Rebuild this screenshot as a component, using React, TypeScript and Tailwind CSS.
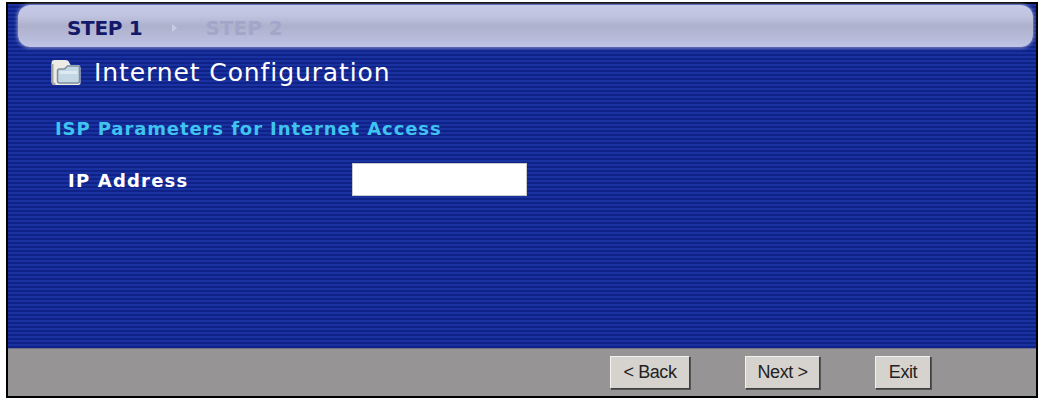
const Folder = () => (
  <svg width="33" height="27" viewBox="0 0 32 27" className="shrink-0">
    <path d="M2 4 Q2 1 5 1 H16 Q19 1 20 4 L21 6 H28 Q31 6 31 9 V24 Q31 26 28 26 H5 Q2 26 2 23 Z" fill="#ecebe6" />
    <path d="M8 12 Q8 10 10 10 H15 L18 7 H28 Q30 7 30 9 V22 Q30 24 28 24 H10 Q8 24 8 22 Z" fill="#c3d8e4" stroke="#7e8f9c" strokeWidth="1.5" />
    <path d="M10 12 H28 V15 H10 Z" fill="#dfeaf0" />
    <path d="M3 5 V23 Q3 25 6 25" fill="none" stroke="#a5a5a0" strokeWidth="2" />
  </svg>
);

const Btn = ({ label, w }: { label: string; w: string }) => (
  <button
    className={`${w} h-[33px] bg-[#d6d3ce] text-[#222] text-[18px] tracking-[-0.4px] border border-t-[#f2f2f0] border-l-[#f2f2f0] border-r-[#3f3f3f] border-b-[#3f3f3f] shadow-[1px_1px_0_#555]`}
  >
    {label}
  </button>
);

export default function App() {
  return (
    <div className="w-[1043px] h-[400px] bg-white pt-[2px] pl-[6px] pr-[5px] pb-[2px] font-['Liberation_Sans',sans-serif]">
      <div className="h-full flex flex-col border-2 border-black">
        <div className="flex-1 px-[1px] pt-[1px] bg-[repeating-linear-gradient(180deg,#1a32a0_0px,#1a32a0_2px,#0f2288_2px,#0f2288_4px)]">
          <div className="ml-[9px] mr-[2px] h-[42px] rounded-[12px] flex items-center pl-[49px] pt-[3px] bg-[linear-gradient(180deg,#c6cae8_0%,#c0c4e0_25%,#adb1cc_50%,#b6bad8_75%,#c0c4e6_100%)] shadow-[0_0_4px_#c0c4e6]">
            <span className="text-[20px] font-bold text-[#14186a] font-['DejaVu_Sans',sans-serif] tracking-[-0.3px]">STEP 1</span>
            <span className="ml-[30px] mr-[28px] w-0 h-0 border-y-[4px] border-y-transparent border-l-[5px] border-l-[#c8cbe4]" />
            <span className="text-[20px] font-bold text-[#a2a7ca] font-['DejaVu_Sans',sans-serif] tracking-[0px]">STEP 2</span>
          </div>
          <div className="flex items-center gap-[12px] ml-[40px] mt-[7px]">
            <Folder />
            <span className="text-[25px] text-white font-['DejaVu_Sans',sans-serif] tracking-[0.9px]">Internet Configuration</span>
          </div>
          <div className="ml-[46px] mt-[23px] text-[18px] font-bold text-[#3fc4f0] font-['DejaVu_Sans',sans-serif] tracking-[0.9px]">
            ISP Parameters for Internet Access
          </div>
          <div className="flex items-center mt-[21px] ml-[59px]">
            <span className="w-[284px] pt-[2px] text-[18px] font-bold text-white font-['DejaVu_Sans',sans-serif] tracking-[1.2px]">IP Address</span>
            <input className="w-[175px] h-[33px] bg-white border border-[#c9c9c9] outline-none" />
          </div>
        </div>
        <div className="h-[48px] flex items-center bg-[#969494] border-t border-[#6f7390] pl-[602px]">
          <Btn label="< Back" w="w-[80px]" />
          <div className="w-[55px]" />
          <Btn label="Next >" w="w-[75px]" />
          <div className="w-[55px]" />
          <Btn label="Exit" w="w-[56px]" />
        </div>
      </div>
    </div>
  );
}
